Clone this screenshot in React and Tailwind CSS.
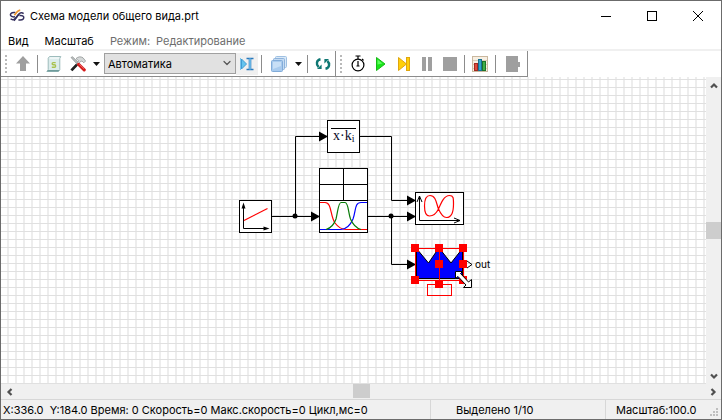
import React from 'react';
import { ChevronDown } from 'lucide-react';

function Separator() {
  return <div className="mx-[3px] h-[18px] w-px shrink-0 bg-[#8c8c8c]" />;
}

function Grip() {
  return (
    <div className="mr-1 flex w-0.5 shrink-0 flex-col gap-0.5">
      {[0, 1, 2, 3, 4].map((i) => (
        <span key={i} className="h-0.5 w-0.5 bg-[#b9b9b9]" />
      ))}
    </div>
  );
}

function ToolButton({ label, width, active, children }) {
  return (
    <button
      type="button"
      aria-label={label}
      className={`flex h-[22px] shrink-0 items-center justify-center ${width} ${active ? 'bg-[#f0f0f0]' : ''}`}
    >
      {children}
    </button>
  );
}

function Caret() {
  return (
    <svg width="7" height="4" viewBox="0 0 7 4" className="shrink-0">
      <path d="M0 0h7L3.5 4z" fill="#111" />
    </svg>
  );
}

function Icon({ children }) {
  return (
    <svg width="16" height="16" viewBox="0 0 16 16" className="shrink-0">
      {children}
    </svg>
  );
}

function AppLogo() {
  return (
    <svg width="16" height="16" viewBox="0 0 16 16" fill="none" strokeWidth="1.5" className="shrink-0">
      <path d="M6.4 4.4H5C2 4.4 1 6 1.6 7.600S4 9 6 8.800" stroke="#35305e" />
      <path d="M1.600 10.800c1.600 1.400 3.400 1 4.600-.4L10 6" stroke="#35305e" />
      <path d="M9.4 11.900h1.800c3 0 4-1.600 3.400-3.200S12.200 7.300 10.400 7.500" stroke="#35305e" />
      <path d="M14.600 5.600c-1.600-1.400-3.400-1-4.600.4L5 12.800" stroke="#35305e" />
      <path d="M5.4 7.2 8.2 3.800c.8-1 1.600-1.500 3-1.700" stroke="#f0962e" strokeWidth="1.800" />
    </svg>
  );
}

function ScriptIcon() {
  return (
    <Icon>
      <path d="M3.5.5h11.3l-1 2v11.2l-1.4 1.8H.8l1.4-2V2.2z" fill="#dcecec" stroke="#9dbcbc" />
      <path d="M1 15.4h11.5l1.2-1.4H2.2z" fill="#6f9c9c" />
      <path d="M3.6 2h9.6" stroke="#fff" />
      <path d="M9.7 6.6H7.2c-1.4 0-1.4 2.2 0 2.2h1.3c1.5 0 1.5 2.4 0 2.4H5.8" fill="none" stroke="#a9c24f" strokeWidth="1.4" />
    </Icon>
  );
}

function ToolsIcon() {
  return (
    <Icon>
      <path d="M1 1.5l1.5-.8L9 7 7.5 8.6z" fill="#b9bdbd" stroke="#7e8585" strokeWidth=".6" />
      <path d="M6 2.6C8 .6 10.8.2 13 1.8L15.6 5l-1.8 1.8L12 5l-1.4.4L2.6 14.6l-1.4-1.2 7.6-8.6z" fill="#d5d8d8" stroke="#868d8d" strokeWidth=".7" />
      <path d="M1.4 14.4 7 8.6" stroke="#222" strokeWidth="2.6" />
      <path d="M8.6 8.4l5.6 5.4" stroke="#d51c1c" strokeWidth="3.2" strokeLinecap="round" />
      <path d="M9.4 8.4l4.6 4.4" stroke="#f37a7a" strokeWidth=".8" />
    </Icon>
  );
}

function CursorIcon() {
  return (
    <Icon>
      <path d="M2.5 3v10L7.5 8z" fill="#64c4ee" stroke="#3f9bd3" />
      <path d="M1.5 2v12" stroke="#7cc4ec" />
      <path d="M7.5 2.5h3v11h-3M14.5 2.5h-3v11h3" fill="none" stroke="#2b79bb" strokeWidth="1.6" />
      <path d="M11 2.5v11" stroke="#7cc9f2" strokeWidth="1.4" />
    </Icon>
  );
}

function LayersIcon() {
  return (
    <Icon>
      <rect x="4.5" y=".5" width="11" height="11" rx="1" fill="#d9e9f8" stroke="#9fc0e2" />
      <rect x="2.5" y="2.5" width="11" height="11" rx="1" fill="#c4dbf3" stroke="#8eb3dc" />
      <rect x=".5" y="4.5" width="11" height="11" rx="1" fill="#a9cbee" stroke="#82acd9" />
      <path d="M2 6h8v4L2 13z" fill="#c8dff6" />
    </Icon>
  );
}

function RefreshIcon() {
  return (
    <Icon>
      <path d="M5.5 3.2C1.4 4 .8 8.4 3.6 11" fill="none" stroke="#0f7773" strokeWidth="2.4" />
      <path d="M2 13h4.6V8.6z" fill="#0f7773" />
      <path d="M10.5 12.8C14.6 12 15.2 7.6 12.4 5" fill="none" stroke="#0f7773" strokeWidth="2.4" />
      <path d="M14 3H9.4v4.4z" fill="#0f7773" />
    </Icon>
  );
}

function StopwatchIcon() {
  return (
    <svg width="14" height="17" viewBox="0 0 14 17" fill="none" stroke="#000" className="shrink-0">
      <circle cx="7" cy="10" r="5.9" strokeWidth="1.2" />
      <path d="M4.5 1h5M7 1v3M7 6v5M5.5 11h3M11 4l1.6 1.4" strokeWidth="1.2" />
    </svg>
  );
}

function PlayIcon() {
  return (
    <Icon>
      <path d="M3.5 1.5v13L12 8z" fill="#19e519" stroke="#16b916" />
      <path d="M4.5 3.5v5l5-1z" fill="#5cff5c" />
    </Icon>
  );
}

function StepIcon() {
  return (
    <Icon>
      <path d="M2.5 1.5v13L10.5 8z" fill="#ffcf0a" stroke="#dfa60e" />
      <rect x="10.5" y="1.5" width="3" height="13" fill="#ffcf0a" stroke="#dfa60e" />
    </Icon>
  );
}

function ChartIcon() {
  return (
    <Icon>
      <rect x=".5" y=".5" width="15" height="15" fill="#f7efe2" stroke="#c9b79e" />
      <path d="M1 4.5h14M1 8.5h14M1 12.5h14" stroke="#dccdb8" />
      <rect x="2.5" y="7.5" width="3" height="7" fill="#e04a3c" stroke="#a32a20" />
      <rect x="6.5" y="3.5" width="3" height="11" fill="#32a5c9" stroke="#166f92" />
      <rect x="10.5" y="5.5" width="3" height="9" fill="#3fae49" stroke="#1d7427" />
    </Icon>
  );
}

function Toolbar() {
  return (
    <div className="flex h-[26px] shrink-0 self-start border-b border-[#8c8c8c]">
      <div className="flex items-center border-r border-[#8c8c8c] pl-1">
        <Grip />
        <ToolButton label="Вверх" width="w-[23px]">
          <Icon>
            <path d="M8 0l7 7.5h-4V15H5V7.5H1z" fill="#9f9f9f" />
          </Icon>
        </ToolButton>
        <Separator />
        <ToolButton label="Скрипт" width="w-[26px]">
          <ScriptIcon />
        </ToolButton>
        <ToolButton label="Инструменты" width="w-[22px]">
          <ToolsIcon />
        </ToolButton>
        <ToolButton label="Список инструментов" width="w-[15px]">
          <Caret />
        </ToolButton>
        <div className="relative w-[132px] shrink-0">
          <select
            aria-label="Раздел"
            className="block h-[21px] w-full appearance-none border border-[#a0a0a0] bg-[#e1e1e1] pl-[3px] text-[11px] leading-[18px] text-black"
          >
            <option>Автоматика</option>
          </select>
          <ChevronDown size={12} strokeWidth={2.4} className="pointer-events-none absolute top-1 right-[3px] text-[#555]" />
        </div>
        <ToolButton label="Вставка" width="w-[22px]" active>
          <CursorIcon />
        </ToolButton>
        <Separator />
        <ToolButton label="Слои" width="w-[28px]">
          <LayersIcon />
        </ToolButton>
        <ToolButton label="Список слоёв" width="w-[11px]">
          <Caret />
        </ToolButton>
        <Separator />
        <ToolButton label="Обновить" width="w-[24px]">
          <RefreshIcon />
        </ToolButton>
      </div>
      <div className="flex items-center border-r border-[#8c8c8c] pl-1">
        <Grip />
        <ToolButton label="Таймер" width="w-[23px]">
          <StopwatchIcon />
        </ToolButton>
        <ToolButton label="Пуск" width="w-[23px]">
          <PlayIcon />
        </ToolButton>
        <ToolButton label="Шаг" width="w-[23px]">
          <StepIcon />
        </ToolButton>
        <ToolButton label="Пауза" width="w-[23px]">
          <Icon>
            <path d="M3 1h4v14H3zM9 1h4v14H9z" fill="#9f9f9f" />
          </Icon>
        </ToolButton>
        <ToolButton label="Стоп" width="w-[23px]">
          <Icon>
            <path d="M1 1h14v14H1z" fill="#9f9f9f" />
          </Icon>
        </ToolButton>
        <Separator />
        <ToolButton label="График" width="w-[24px]">
          <ChartIcon />
        </ToolButton>
        <Separator />
        <ToolButton label="Выход" width="w-[28px]">
          <Icon>
            <path d="M1 0h12v6h2v5h-2v5H1z" fill="#9f9f9f" />
          </Icon>
        </ToolButton>
      </div>
    </div>
  );
}

const ARROWS = [
  [320, 216],
  [328, 136],
  [416, 200],
  [416, 216],
  [416, 264],
];

const HANDLES = [
  [415, 248],
  [439, 248],
  [463, 248],
  [439, 264],
  [463, 264],
  [415, 280],
  [463, 280],
  [439, 284],
];

function Diagram() {
  return (
    <svg width="704" height="306" viewBox="1 77 704 306" fill="none" stroke="#000" className="absolute top-0 left-0">
      {/* wires */}
      <path d="M271.5 216.5H312M295.5 216.5V136.5H320M360 136.5H391.5V200.5H408M368 216.5H408M391.5 216.5V264.5H408" />
      {ARROWS.map(([x, y]) => (
        <path key={`${x}-${y}`} d={`M${x} ${y + 0.5}l-9 -5v10z`} fill="#000" stroke="none" />
      ))}
      <circle cx="295" cy="216" r="2.5" fill="#000" stroke="none" />
      <circle cx="391" cy="216" r="2.5" fill="#000" stroke="none" />

      {/* ramp source */}
      <rect x="239.5" y="200.5" width="32" height="32" fill="#fff" />
      <path d="M243.5 204V228.5H268" />
      <path d="M243.5 202.5l-2 6h4zM269.5 228.5l-6-2v4z" fill="#000" stroke="none" />
      <path d="M244 220.5L267.5 208.5" stroke="#f00" strokeWidth="1.2" />

      {/* gain */}
      <rect x="327.5" y="120.5" width="32" height="32" fill="#fff" />
      <path d="M331 128.5H356" />
      <text x="333" y="140" fill="#0a0a28" stroke="none" className="font-['Liberation_Serif',serif] text-[14px]">
        x·k
        <tspan dy="2" className="text-[10px]">i</tspan>
      </text>

      {/* membership functions */}
      <rect x="319.5" y="168.5" width="48" height="64" fill="#fff" />
      <path d="M343.5 168.5V200.5M319.5 184.5H367.5M319.5 200.5H367.5" />
      <path d="M320 202.5H325C332 202.5 330 216 335 223C338 227 341 229.5 346 229.5H367" stroke="#f00" strokeWidth="1.2" />
      <path d="M320 229.5H341C346 229 350 226 353 219C356 211 354.5 202.5 361 202.5H367" stroke="#00f" strokeWidth="1.2" />
      <path d="M326 229.5C331 228 334 225 336 219C338 210 338.5 202.5 341 202.5H345C348.5 202.5 348 212 350.5 219C353 225 356 228 361 229.5" stroke="#087a08" strokeWidth="1.2" />

      {/* scope */}
      <rect x="415.5" y="192.5" width="48" height="32" fill="#fff" />
      <path d="M419.5 196V220.5H460M417 202L419.5 196L422 202M454 218L460 220.5L454 223" />
      <path
        d="M430 195.5C436 195.5 436.5 204 438.5 209C440.5 213.5 443 217.5 446.5 217.5C452 217.5 453.5 211 453.5 204C453.5 198 453.5 195.5 449.5 195.5C444 195.5 441 203 438.5 209C436 214 433 216 429.5 216C426 216 424.5 211 424.5 206C424.5 201 426 195.5 430 195.5Z"
        stroke="#f00"
        strokeWidth="1.2"
      />

      {/* selected fuzzy block */}
      <path d="M416.5 248.5L428.5 263L438.5 248.5L439.5 248.5L451 263L462.5 248.5V278.5H416.5Z" fill="#00f" />
      <path d="M415.5 248.5H463.5V280.5H415.5ZM439.5 248V284" stroke="#f00" />
      <rect x="427.5" y="284.5" width="24" height="11" stroke="#f00" />
      {HANDLES.map(([x, y]) => (
        <rect key={`${x}-${y}`} x={x - 4} y={y - 4} width="8" height="8" fill="#f00" stroke="none" />
      ))}
      <path d="M467 261L472 264.5L467 268" />
      <text x="475" y="268" fill="#000" stroke="none" className="text-[10px]">out</text>

      {/* resize cursor */}
      <path
        d="M455.5 271.5H462.5L460.5 273.5L468.5 282L471.5 279.5V287.5H463.5L466 285L458 276.5L455.5 278.5Z"
        fill="#fff"
      />
    </svg>
  );
}

function ScrollArrow({ turn }) {
  return (
    <svg width="8" height="8" viewBox="0 0 8 8" className={turn}>
      <path d="M1 5.5L4 2.5L7 5.5" fill="none" stroke="#505050" strokeWidth="2.2" />
    </svg>
  );
}

function Canvas() {
  return (
    <div className="grid min-h-0 flex-1 grid-cols-[minmax(0,1fr)_15px] grid-rows-[minmax(0,1fr)_15px] bg-[#f0f0f0]">
      <div className="relative overflow-hidden bg-white bg-[linear-gradient(to_bottom,#e0e0e0_1px,transparent_1px),linear-gradient(to_right,#ededed_2px,transparent_2px)] bg-size-[8px_8px] bg-position-[6px_2px]">
        <Diagram />
      </div>
      <div className="flex flex-col items-center">
        <button type="button" aria-label="Прокрутить вверх" className="flex h-[17px] items-center">
          <ScrollArrow turn="rotate-0" />
        </button>
        <div className="flex w-full flex-1 flex-col justify-center">
          <div className="h-[17px] w-full bg-[#cdcdcd]" />
        </div>
        <button type="button" aria-label="Прокрутить вниз" className="flex h-[17px] items-center">
          <ScrollArrow turn="rotate-180" />
        </button>
      </div>
      <div className="col-span-2 flex items-center">
        <button type="button" aria-label="Прокрутить влево" className="flex w-[17px] justify-center">
          <ScrollArrow turn="-rotate-90" />
        </button>
        <div className="flex h-full flex-1 justify-center">
          <div className="h-[14px] w-[17px] bg-[#cdcdcd]" />
        </div>
        <button type="button" aria-label="Прокрутить вправо" className="flex w-[17px] justify-center">
          <ScrollArrow turn="rotate-90" />
        </button>
      </div>
    </div>
  );
}

function StatusBar() {
  return (
    <footer className="flex h-5 shrink-0 border-t border-[#d7d7d7] bg-[#f0f0f0] text-[11px] leading-5 whitespace-pre">
      <div className="flex-1 pl-0.5">X:336.0  Y:184.0 Время: 0 Скорость=0 Макс.скорость=0 Цикл,мс=0</div>
      <div className="w-[175px] border-l border-[#d7d7d7] pl-[25px]">Выделено 1/10</div>
      <div className="flex w-[116px] justify-between border-l border-[#d7d7d7] pl-[10px]">
        <span>Масштаб:100.0</span>
        <svg width="11" height="11" viewBox="0 0 11 11" fill="#bfbfbf" className="self-end">
          <path d="M6 0h2v2H6zM6 3h2v2H6zM3 3h2v2H3zM6 6h2v2H6zM3 6h2v2H3zM0 6h2v2H0z" />
        </svg>
      </div>
    </footer>
  );
}

export default function App() {
  return (
    <div className="flex h-screen flex-col overflow-hidden border border-[#6b6b6b] bg-white font-[Inter,sans-serif] text-black">
      <header className="flex h-[29px] shrink-0 items-center pl-2">
        <AppLogo />
        <h1 className="ml-[5px] flex-1 text-[11px] leading-4">Схема модели общего вида.prt</h1>
        <button type="button" aria-label="Свернуть" className="flex w-[46px] justify-center">
          <svg width="10" height="10" viewBox="0 0 10 10">
            <path d="M0 5.5h10" stroke="#000" />
          </svg>
        </button>
        <button type="button" aria-label="Развернуть" className="flex w-[46px] justify-center">
          <svg width="10" height="10" viewBox="0 0 10 10">
            <rect x=".5" y=".5" width="9" height="9" fill="none" stroke="#000" />
          </svg>
        </button>
        <button type="button" aria-label="Закрыть" className="flex w-[46px] justify-center">
          <svg width="10" height="10" viewBox="0 0 10 10">
            <path d="M0 0l10 10M10 0L0 10" stroke="#000" />
          </svg>
        </button>
      </header>
      <nav className="flex h-[21px] shrink-0 items-center gap-4 border-b-2 border-[#f0f0f0] pt-0.5 pl-[7px] text-[11px] leading-4">
        <button type="button">Вид</button>
        <button type="button">Масштаб</button>
        <span className="flex gap-[6px] text-[#6d6d6d]">
          <span>Режим:</span>
          <span>Редактирование</span>
        </span>
      </nav>
      <Toolbar />
      <Canvas />
      <StatusBar />
    </div>
  );
}
